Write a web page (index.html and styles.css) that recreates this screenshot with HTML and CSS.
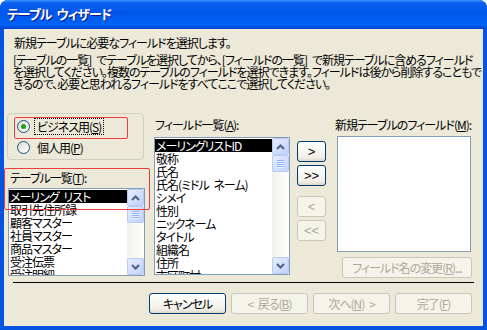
FILE: index.html
```html
<!DOCTYPE html>
<html lang="ja">
<head>
    <meta charset="UTF-8">
    <title>テーブル ウィザード</title>
    <link rel="stylesheet" href="styles.css">
</head>
<body>
    <div class="window">
        <div class="titlebar">テーブル ウィザード</div>
        <div class="content">
            <p class="intro">新規テーブルに必要なフィールドを選択します。</p>
            <p class="help">[テーブルの一覧] でテーブルを選択してから、[フィールドの一覧] で新規テーブルに含めるフィールド<br>を選択してください。複数のテーブルのフィールドを選択できます。フィールドは後から削除することもで<br>きるので、必要と思われるフィールドをすべてここで選択してください。</p>

            <div class="main">
                <div class="col-tables">
                    <div class="groupbox">
                        <label class="radio">
                            <span class="radio-dot checked"></span>
                            <span class="focus">ビジネス用(<u>S</u>)</span>
                        </label>
                        <label class="radio">
                            <span class="radio-dot"></span>
                            <span class="radio-text">個人用(<u>P</u>)</span>
                        </label>
                    </div>
                    <div class="label tables-label">テーブル一覧(<u>T</u>):</div>
                    <div class="listbox tables-list">
                        <ul class="items">
                            <li class="selected">メーリング リスト</li>
                            <li>取引先住所録</li>
                            <li>顧客マスター</li>
                            <li>社員マスター</li>
                            <li>商品マスター</li>
                            <li>受注伝票</li>
                            <li>受注明細</li>
                        </ul>
                        <div class="scrollbar">
                            <div class="sb-btn"><svg width="9" height="6" viewBox="0 0 9 6"><polyline points="1,5 4.5,1.5 8,5" fill="none" stroke="#4d6185" stroke-width="2"/></svg></div>
                            <div class="sb-thumb"><span></span><span></span><span></span><span></span></div>
                            <div class="sb-track"></div>
                            <div class="sb-btn"><svg width="9" height="6" viewBox="0 0 9 6"><polyline points="1,1 4.5,4.5 8,1" fill="none" stroke="#4d6185" stroke-width="2"/></svg></div>
                        </div>
                    </div>
                </div>

                <div class="col-fields">
                    <div class="label">フィールド一覧(<u>A</u>):</div>
                    <div class="listbox fields-list">
                        <ul class="items">
                            <li class="selected">メーリングリストID</li>
                            <li>敬称</li>
                            <li>氏名</li>
                            <li>氏名(ミドル ネーム)</li>
                            <li>シメイ</li>
                            <li>性別</li>
                            <li>ニックネーム</li>
                            <li>タイトル</li>
                            <li>組織名</li>
                            <li>住所</li>
                            <li>市区町村</li>
                        </ul>
                        <div class="scrollbar">
                            <div class="sb-btn"><svg width="9" height="6" viewBox="0 0 9 6"><polyline points="1,5 4.5,1.5 8,5" fill="none" stroke="#4d6185" stroke-width="2"/></svg></div>
                            <div class="sb-thumb"><span></span><span></span><span></span><span></span></div>
                            <div class="sb-track"></div>
                            <div class="sb-btn"><svg width="9" height="6" viewBox="0 0 9 6"><polyline points="1,1 4.5,4.5 8,1" fill="none" stroke="#4d6185" stroke-width="2"/></svg></div>
                        </div>
                    </div>
                </div>

                <div class="col-moves">
                    <button class="btn move">&gt;</button>
                    <button class="btn move">&gt;&gt;</button>
                    <button class="btn move disabled spaced">&lt;</button>
                    <button class="btn move disabled">&lt;&lt;</button>
                </div>

                <div class="col-new">
                    <div class="label">新規テーブルのフィールド(<u>M</u>):</div>
                    <div class="listbox new-list"></div>
                    <button class="btn disabled rename">フィールド名の変更(<u>R</u>)...</button>
                </div>
            </div>

            <div class="separator"></div>

            <div class="footer">
                <button class="btn">キャンセル</button>
                <button class="btn disabled">&lt; 戻る(<u>B</u>)</button>
                <button class="btn disabled">次へ(<u>N</u>) &gt;</button>
                <button class="btn disabled">完了(<u>F</u>)</button>
            </div>
        </div>

        <div class="mark mark-radio"></div>
        <div class="mark mark-tables"></div>
    </div>
</body>
</html>
```

FILE: styles.css
```css
body {
    margin: 0;
    background: #fff;
    font-family: "Noto Sans CJK JP", "Noto Sans", sans-serif;
    font-size: 12px;
    font-feature-settings: "palt";
    letter-spacing: -1px;
    word-spacing: 3px;
    color: #000;
}
.window {
    position: relative;
    width: 487px;
    height: 330px;
    display: flex;
    flex-direction: column;
    background: #0553e3;
    border-radius: 8px 8px 0 0;
    overflow: hidden;
}
.titlebar {
    height: 29px;
    flex: none;
    box-sizing: border-box;
    padding: 6px 0 0 7px;
    line-height: 16px;
    font-size: 13px;
    font-weight: bold;
    color: #fff;
    text-shadow: 1px 1px #0a1883;
    background: linear-gradient(#3d95ff 0%, #0a5fef 10%, #0056eb 45%, #0062f8 85%, #0050e0 94%, #0040c4 100%);
}
.content {
    flex: 1;
    margin: 0 4px 4px;
    padding-top: 7px;
    background: #ece9d8;
}
.intro {
    margin: 0 0 0 10px;
    line-height: 13px;
}
.help {
    margin: 5px 0 0 9px;
    line-height: 12px;
    white-space: nowrap;
}
.main {
    display: flex;
    align-items: flex-start;
    margin: 23px 0 0 3px;
}
.col-tables {
    width: 138px;
}
.groupbox {
    width: 137px;
    height: 47px;
    box-sizing: border-box;
    border: 1px solid #d0d0bf;
    border-radius: 4px;
    padding: 2px 0 0 9px;
}
.radio {
    display: flex;
    align-items: center;
    height: 21px;
}
.radio-dot {
    width: 13px;
    height: 13px;
    box-sizing: border-box;
    border: 1px solid #1c5180;
    border-radius: 50%;
    background: linear-gradient(135deg, #dcdcd5, #fff);
    display: flex;
    align-items: center;
    justify-content: center;
    margin-right: 4px;
}
.radio-dot.checked::after {
    content: "";
    width: 5px;
    height: 5px;
    border-radius: 50%;
    background: #21a121;
}
.focus {
    border: 1px dotted #000;
    padding: 1px 2px;
    line-height: 13px;
}
.radio-text {
    padding-left: 3px;
}
.label {
    line-height: 14px;
    margin-left: 1px;
    white-space: nowrap;
}
.tables-label {
    margin: 11px 0 0 3px;
}
.listbox {
    box-sizing: border-box;
    border: 1px solid #7f9db9;
    background: #fff;
    display: flex;
    overflow: hidden;
}
.tables-list {
    width: 137px;
    height: 88px;
    margin: 3px 0 0 1px;
}
.fields-list {
    width: 136px;
    height: 138px;
    margin-top: 5px;
}
.items {
    list-style: none;
    margin: 0;
    padding: 1px 0 0;
    flex: 1;
    overflow: hidden;
}
.items li {
    height: 13px;
    line-height: 13px;
    padding-left: 1px;
    white-space: nowrap;
}
.items li.selected {
    background: #000;
    color: #fff;
}
.scrollbar {
    width: 17px;
    display: flex;
    flex-direction: column;
    background: linear-gradient(90deg, #f3f1ec, #fefefb);
}
.sb-btn, .sb-thumb {
    box-sizing: border-box;
    border: 1px solid #b8caf5;
    border-radius: 2px;
    background: linear-gradient(135deg, #e6eefe, #c0d1fb);
}
.sb-btn {
    height: 17px;
    display: flex;
    align-items: center;
    justify-content: center;
}
.sb-thumb {
    height: 17px;
    display: flex;
    flex-direction: column;
    align-items: center;
    justify-content: center;
    gap: 1px;
}
.sb-thumb span {
    width: 7px;
    height: 1px;
    background: #8cb0f8;
    box-shadow: 0 1px #eef4fe;
}
.sb-track {
    flex: 1;
}
.col-fields {
    margin-left: 9px;
    padding-top: 5px;
}
.col-moves {
    display: flex;
    flex-direction: column;
    gap: 3px;
    margin-left: 7px;
    padding-top: 28px;
}
.col-moves .spaced {
    margin-top: 7px;
}
.col-new {
    margin-left: 8px;
    padding-top: 5px;
}
.new-list {
    width: 134px;
    height: 116px;
    margin: 4px 0 0 3px;
}
.btn {
    box-sizing: border-box;
    height: 21px;
    padding: 0;
    border: 1px solid #003c74;
    border-radius: 3px;
    background: linear-gradient(#fff, #f0efe8 80%, #dcd9cc);
    font: inherit;
    letter-spacing: inherit;
    word-spacing: inherit;
    line-height: 17px;
    color: #000;
}
.btn.disabled {
    border-color: #c9c7ba;
    background: #f5f4ea;
    color: #aca899;
}
.move {
    width: 29px;
    font-family: "Liberation Sans", sans-serif;
    font-size: 13px;
    letter-spacing: 0;
}
.rename {
    display: block;
    width: 130px;
    margin: 5px 0 0 8px;
}
.separator {
    width: 461px;
    height: 1px;
    margin: 4px 0 0 9px;
    background: #000;
}
.footer {
    display: flex;
    gap: 5px;
    margin: 10px 0 0 145px;
}
.footer .btn {
    width: 77px;
}
.mark {
    position: absolute;
    border: 1px solid #f03c3c;
    border-radius: 2px;
}
.mark-radio {
    left: 14px;
    top: 117px;
    width: 112px;
    height: 20px;
}
.mark-tables {
    left: 4px;
    top: 168px;
    width: 144px;
    height: 40px;
}
```
